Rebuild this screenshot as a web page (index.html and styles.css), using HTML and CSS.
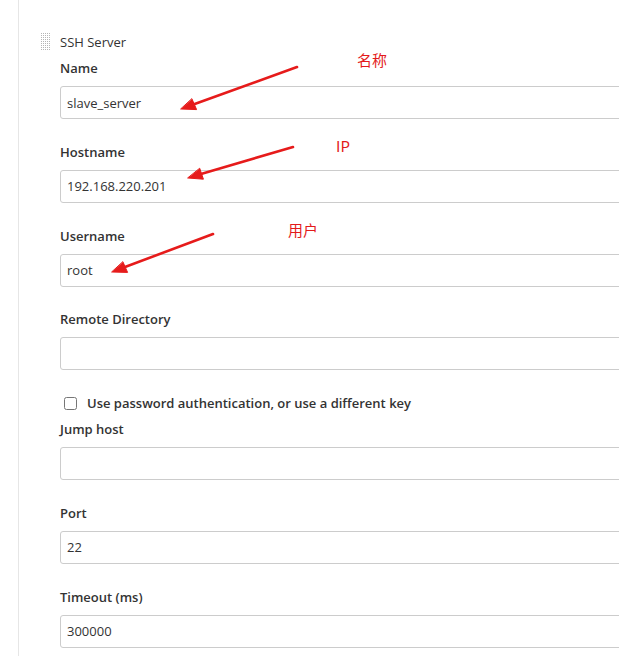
FILE: index.html
```html
<!DOCTYPE html>
<html>
<head>
<meta charset="utf-8">
<link rel="stylesheet" href="styles.css">
</head>
<body>
<div class="page">
  <div class="section">
    <div class="section-head">
      <svg class="grip" width="10" height="18" viewBox="0 0 10 18">
        <defs>
          <pattern id="dots" width="2" height="2" patternUnits="userSpaceOnUse">
            <rect x="0" y="0" width="1" height="1" fill="#b5b5b5"/>
          </pattern>
        </defs>
        <rect width="10" height="18" fill="url(#dots)"/>
      </svg>
      <span class="section-title">SSH Server</span>
    </div>
    <div class="fields">
      <div class="field">
        <div class="label">Name</div>
        <input class="input" type="text" value="slave_server">
      </div>
      <div class="field">
        <div class="label">Hostname</div>
        <input class="input" type="text" value="192.168.220.201">
      </div>
      <div class="field">
        <div class="label">Username</div>
        <input class="input" type="text" value="root">
      </div>
      <div class="field">
        <div class="label">Remote Directory</div>
        <input class="input" type="text" value="">
      </div>
      <label class="check-row">
        <input class="check" type="checkbox">
        <span class="check-text">Use password authentication, or use a different key</span>
      </label>
      <div class="field">
        <div class="label">Jump host</div>
        <input class="input" type="text" value="">
      </div>
      <div class="field">
        <div class="label">Port</div>
        <input class="input" type="text" value="22">
      </div>
      <div class="field">
        <div class="label">Timeout (ms)</div>
        <input class="input" type="text" value="300000">
      </div>
    </div>
  </div>
</div>

<svg class="annotations" width="619" height="656" viewBox="0 0 619 656">
  <g fill="#e61b1b" stroke="#e61b1b" stroke-linecap="round">
    <line x1="297" y1="67" x2="194" y2="104.2" stroke-width="2.6"/>
    <polygon points="181,109 196.6,109.6 192,99" stroke-width="1" stroke-linejoin="round"/>
    <line x1="293" y1="147" x2="201" y2="174" stroke-width="2.6"/>
    <polygon points="188,178 203.4,179.2 199.8,168.6" stroke-width="1" stroke-linejoin="round"/>
    <line x1="213" y1="234" x2="125" y2="267" stroke-width="2.6"/>
    <polygon points="112,272 127.6,272.4 123,262" stroke-width="1" stroke-linejoin="round"/>
  </g>
  <g class="note" fill="#e31a1a">
    <text x="357" y="66">名称</text>
    <text x="336" y="152">IP</text>
    <text x="288" y="236">用户</text>
  </g>
</svg>
</body>
</html>
```

FILE: styles.css
```css
html, body {
  margin: 0;
  padding: 0;
  background: #ffffff;
  overflow: hidden;
  width: 619px;
  height: 656px;
}

body {
  position: relative;
  font-family: "Open Sans", "Noto Sans", "Liberation Sans", sans-serif;
  font-size: 13px;
  color: #333333;
}

.page {
  margin-left: 18px;
  border-left: 1px solid #e6e6e6;
  width: 601px;
  height: 656px;
  overflow: hidden;
  padding: 33px 0 0 22px;
  box-sizing: border-box;
}

.section {
  width: 640px;
}

.section-head {
  display: flex;
  align-items: center;
  height: 18px;
}

.grip {
  display: block;
  flex: none;
}

.section-title {
  margin-left: 9px;
  font-size: 13px;
  line-height: 18px;
  color: #333333;
}

.fields {
  padding-left: 19px;
  padding-top: 8px;
}

.field {
  margin-bottom: 23.75px;
}

.label {
  font-weight: 600;
  font-size: 13px;
  line-height: 18px;
  height: 18px;
  color: #333333;
  margin-bottom: 9px;
}

.input {
  display: block;
  box-sizing: border-box;
  width: 620px;
  height: 33px;
  margin: 0;
  padding: 0 6px;
  border: 1px solid #cccccc;
  border-radius: 3px;
  font-family: "Open Sans", "Noto Sans", "Liberation Sans", sans-serif;
  font-size: 13px;
  color: #333333;
  background: #ffffff;
  outline: none;
}

.check-row {
  display: flex;
  align-items: center;
  height: 18px;
  margin-bottom: 8px;
}

.check {
  width: 13px;
  height: 13px;
  margin: 0 0 0 4px;
  flex: none;
}

.check-text {
  margin-left: 10px;
  font-weight: 600;
  font-size: 13px;
  line-height: 18px;
  color: #333333;
}

.annotations {
  position: absolute;
  left: 0;
  top: 0;
  pointer-events: none;
}

.note text {
  font-family: "Noto Sans CJK SC", "Noto Sans", sans-serif;
  font-size: 15px;
}
```
